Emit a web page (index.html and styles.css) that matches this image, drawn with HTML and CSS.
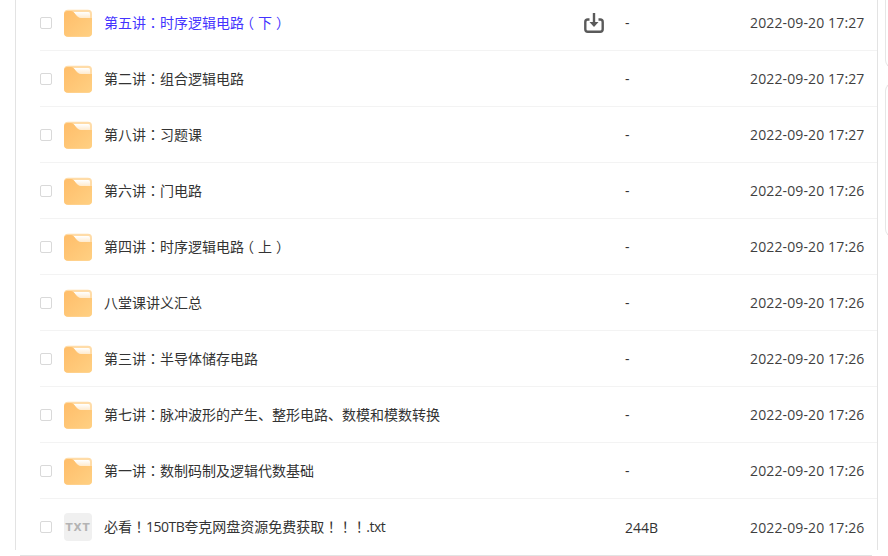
FILE: index.html
```html
<!DOCTYPE html>
<html lang="zh-CN">
<head>
<meta charset="utf-8">
<title>文件列表</title>
<link rel="stylesheet" href="styles.css">
</head>
<body>
<div class="page">
  <main class="panel">
    <div class="list">
      <div class="row hover">
        <span class="check"></span>
        <svg class="icon" viewBox="0 0 28 28"><use href="#folder"/></svg>
        <span class="name">第五讲<span class="p" lang="zh-Hant">：</span>时序逻辑电路<span class="po">（</span>下<span class="pc">）</span></span>
        <svg class="dl" viewBox="0 0 22 22" fill="none"><path d="M6.500 7.500H4.800A2.500 2.500 0 0 0 2.300 10V17.200A2.500 2.500 0 0 0 4.800 19.700H17.200A2.500 2.500 0 0 0 19.700 17.200V10A2.500 2.500 0 0 0 17.200 7.500H15.500" stroke="#5a5a5a" stroke-width="2.400"/><path d="M11 1V10" stroke="#5a5a5a" stroke-width="2.400"/><path d="M6.500 10H15.500L11 15Z" fill="#5a5a5a"/></svg>
        <span class="size">-</span>
        <span class="date">2022-09-20 17:27</span>
      </div>
      <div class="row">
        <span class="check"></span>
        <svg class="icon" viewBox="0 0 28 28"><use href="#folder"/></svg>
        <span class="name">第二讲<span class="p" lang="zh-Hant">：</span>组合逻辑电路</span>
        <span class="size">-</span>
        <span class="date">2022-09-20 17:27</span>
      </div>
      <div class="row">
        <span class="check"></span>
        <svg class="icon" viewBox="0 0 28 28"><use href="#folder"/></svg>
        <span class="name">第八讲<span class="p" lang="zh-Hant">：</span>习题课</span>
        <span class="size">-</span>
        <span class="date">2022-09-20 17:27</span>
      </div>
      <div class="row">
        <span class="check"></span>
        <svg class="icon" viewBox="0 0 28 28"><use href="#folder"/></svg>
        <span class="name">第六讲<span class="p" lang="zh-Hant">：</span>门电路</span>
        <span class="size">-</span>
        <span class="date">2022-09-20 17:26</span>
      </div>
      <div class="row">
        <span class="check"></span>
        <svg class="icon" viewBox="0 0 28 28"><use href="#folder"/></svg>
        <span class="name">第四讲<span class="p" lang="zh-Hant">：</span>时序逻辑电路<span class="po">（</span>上<span class="pc">）</span></span>
        <span class="size">-</span>
        <span class="date">2022-09-20 17:26</span>
      </div>
      <div class="row">
        <span class="check"></span>
        <svg class="icon" viewBox="0 0 28 28"><use href="#folder"/></svg>
        <span class="name">八堂课讲义汇总</span>
        <span class="size">-</span>
        <span class="date">2022-09-20 17:26</span>
      </div>
      <div class="row">
        <span class="check"></span>
        <svg class="icon" viewBox="0 0 28 28"><use href="#folder"/></svg>
        <span class="name">第三讲<span class="p" lang="zh-Hant">：</span>半导体储存电路</span>
        <span class="size">-</span>
        <span class="date">2022-09-20 17:26</span>
      </div>
      <div class="row">
        <span class="check"></span>
        <svg class="icon" viewBox="0 0 28 28"><use href="#folder"/></svg>
        <span class="name">第七讲<span class="p" lang="zh-Hant">：</span>脉冲波形的产生、整形电路、数模和模数转换</span>
        <span class="size">-</span>
        <span class="date">2022-09-20 17:26</span>
      </div>
      <div class="row">
        <span class="check"></span>
        <svg class="icon" viewBox="0 0 28 28"><use href="#folder"/></svg>
        <span class="name">第一讲<span class="p" lang="zh-Hant">：</span>数制码制及逻辑代数基础</span>
        <span class="size">-</span>
        <span class="date">2022-09-20 17:26</span>
      </div>
      <div class="row last">
        <span class="check"></span>
        <span class="txt">TXT</span>
        <span class="name">必看<span class="p" lang="zh-Hant">！</span><span class="latin">150TB</span>夸克网盘资源免费获取<span class="p" lang="zh-Hant">！！！</span><span class="latin">.txt</span></span>
        <span class="size">244B</span>
        <span class="date">2022-09-20 17:26</span>
      </div>
    </div>
  </main>
  <aside class="side">
    <div class="card card-a"></div>
    <div class="card card-b"></div>
  </aside>
</div>
<svg class="defs" width="0" height="0">
  <defs>
    <linearGradient id="fg" x1="0" y1="0" x2="1" y2="1">
      <stop offset="0" stop-color="#ffbd69"/>
      <stop offset="1" stop-color="#ffd083"/>
    </linearGradient>
    <linearGradient id="hl" x1="0" y1="0" x2="0" y2="1">
      <stop offset="0" stop-color="#ffffff"/>
      <stop offset="1" stop-color="#ffe9c9"/>
    </linearGradient>
    <symbol id="folder" viewBox="0 0 28 28">
      <rect width="28" height="27" y="0.800" rx="4" fill="#ffdca8"/>
      <path d="M9 3H24.500A1.500 1.500 0 0 1 26 4.500V9.500H16Z" fill="url(#hl)"/>
      <path d="M0 5.500A3.500 3.500 0 0 1 3.500 2H7C9 2 10 3.500 11.500 5.500C13 7.500 14.500 9 17 9H28V23.800A4 4 0 0 1 24 27.800H4A4 4 0 0 1 0 23.800Z" fill="url(#fg)"/>
    </symbol>
  </defs>
</svg>
</body>
</html>
```
FILE: styles.css
```css
* { box-sizing: border-box; }
html, body { margin: 0; height: 100%; overflow: hidden; background: #fff; }
body { font-family: "Open Sans", "Noto Sans CJK SC", sans-serif; color: #333; font-size: 14px; }
.page { display: flex; height: 556px; padding-left: 15px; align-items: flex-start; }
.panel { position: relative; width: 863px; height: 550px; border-left: 1px solid #e3e3e3; border-right: 1px solid #e3e3e3; background: #fff; flex: none; }
.panel::after { content: ""; position: absolute; left: 4px; right: 5px; top: 555px; height: 1px; background: #e3e3e3; }
.list { margin-top: -5px; padding-left: 24px; }
.row { height: 56px; display: flex; align-items: center; border-bottom: 1px solid #f3f3f3; background: #fff; }
.row.last { border-bottom: 0; }
.check { width: 12px; height: 12px; border: 1px solid #d9d9d9; border-radius: 2px; flex: none; }
.icon { width: 28px; height: 28px; margin-left: 12px; flex: none; }
.txt { width: 28px; height: 28px; margin-left: 12px; flex: none; border-radius: 4px; background: #f0f0f0; color: #b4b4b4; font-size: 10.5px; font-weight: 700; letter-spacing: 0.8px; display: flex; align-items: center; justify-content: center; font-family: "DejaVu Sans", sans-serif; }
.name { margin-left: 12px; margin-right: auto; padding-bottom: 2px; white-space: nowrap; }
.p { font-family: "Noto Sans CJK TC", sans-serif; }
.po { margin-left: -4px; margin-right: 4px; }
.pc { margin-left: 4px; margin-right: -4px; }
.latin { letter-spacing: -0.5px; }
.hover .name { color: #4433ff; }
.dl { width: 22px; height: 22px; flex: none; margin-right: 20px; }
.size { width: 125px; flex: none; }
.date { width: 127px; flex: none; letter-spacing: 0.13px; color: #3f3f3f; }
.side { margin-left: 7px; width: 20px; flex: none; display: flex; flex-direction: column; gap: 15px; }
.card { border: 1px solid #e6e6e6; border-right: 0; border-radius: 8px 0 0 8px; }
.card-a { height: 68px; border-top: 0; border-top-left-radius: 0; }
.card-b { height: 154px; }
.defs { position: absolute; }
```
